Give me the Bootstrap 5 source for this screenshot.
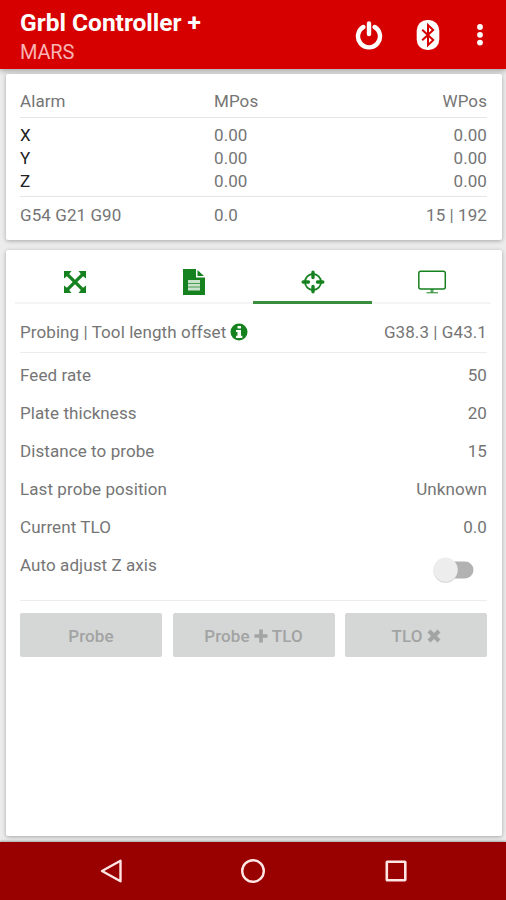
<!DOCTYPE html>
<html lang="en">
<head>
<meta charset="utf-8">
<meta name="viewport" content="width=device-width, initial-scale=1">
<title>Grbl Controller +</title>
<link href="https://cdn.jsdelivr.net/npm/bootstrap@5.3.0/dist/css/bootstrap.min.css" rel="stylesheet">
<style>
body { font-family: Roboto, "Liberation Sans", sans-serif; font-size: 17px; line-height: 23px; color: #757575; background: #ececec; letter-spacing: .08px; height: 900px; overflow: hidden; }
.app-bar { height: 69px; background: #d60000; padding: 0 17px 0 20px; box-shadow: 0 2px 5px rgba(0,0,0,.3); }
.app-title { font-size: 24.5px; line-height: 28px; font-weight: 700; color: #fff; letter-spacing: 0; padding-top: 9px; }
.app-sub { font-size: 20px; line-height: 24px; color: #f8b4b4; letter-spacing: -.2px; padding-top: 3px; }
.bt { margin-left: 33px; }
.more { margin: 0 5px 0 36px; }
.panel { background: #fff; border-radius: 2px; box-shadow: 0 1px 4px rgba(0,0,0,.3); margin-left: 6px; margin-right: 4px; }
.status { margin-top: 5px; height: 166px; padding: 12px 15px 0 14px; }
.status .c1 { width: 194px; }
.status-head { height: 32px; padding-top: 4px; border-bottom: 1px solid #e6e6e6; }
.axes { height: 79px; padding-top: 6px; border-bottom: 1px solid #e6e6e6; }
.axis { color: #212121; }
.modes { padding-top: 7px; }
.work { margin-top: 10px; height: 586px; }
.tabs { height: 54px; margin: 0 11px 0 9px; }
.tab-item { border: 0; border-bottom: 2px solid #f5f5f5; background: none; padding: 12px 0 0; color: #16811f; }
.tab-item.active { border-bottom: 3px solid #388e3c; }
.work-body { padding: 0 15px 0 14px; }
.probe-head { height: 49px; padding-top: 8px; border-bottom: 1px solid #ececec; }
.settings { padding-top: 3px; height: 248px; border-bottom: 1px solid #ececec; }
.setting { height: 38px; }
.switch { width: 42px; height: 26px; margin: 9px 13px 0 0; }
.actions { padding-top: 12px; gap: 10.5px; }
.act { height: 44px; border: 0; border-radius: 2px; background: #d5d7d6; color: #a2a3a3; font-weight: 500; font-size: 17px; flex: 0 0 142px; padding: 2px 0 0; letter-spacing: .1px; }
.act.wide { flex: 1 1 0; }
.soft-keys { height: 58px; margin-top: 6px; background: #990000; padding: 0 39px 0 40px; box-shadow: 0 -1px 2px rgba(0,0,0,.3); position: relative; }
.soft-keys > div { flex: 1; }
svg { display: block; flex: none; }
</style>
</head>
<body>
<header class="app-bar d-flex justify-content-between">
  <div>
    <div class="app-title">Grbl Controller +</div>
    <div class="app-sub">MARS</div>
  </div>
  <div class="d-flex align-items-center">
    <svg width="28" height="30" viewBox="0 0 28 30" fill="none" stroke="#fff" stroke-width="4.4" stroke-linecap="round"><path d="M8.3 7a11 11 0 1 0 11.4 0M14 3.5v10.500"/></svg>
    <svg width="24" height="32" viewBox="0 0 24 32" class="bt"><rect x=".7" y="1" width="22.6" height="30" rx="10.5" fill="#fff"/><path d="M6.200 10.800l11 10.300-5.200 5V6l5.200 5-11 10.300" fill="none" stroke="#d60000" stroke-width="2"/></svg>
    <svg width="8" height="22" viewBox="0 0 8 22" fill="#fff" class="more"><circle cx="4" cy="3" r="2.9"/><circle cx="4" cy="10.8" r="2.9"/><circle cx="4" cy="18.6" r="2.9"/></svg>
  </div>
</header>
<section class="panel status">
  <div class="status-head d-flex"><div class="c1">Alarm</div><div>MPos</div><div class="ms-auto">WPos</div></div>
  <div class="axes">
    <div class="d-flex"><div class="c1 axis">X</div><div>0.00</div><div class="ms-auto">0.00</div></div>
    <div class="d-flex"><div class="c1 axis">Y</div><div>0.00</div><div class="ms-auto">0.00</div></div>
    <div class="d-flex"><div class="c1 axis">Z</div><div>0.00</div><div class="ms-auto">0.00</div></div>
  </div>
  <div class="modes d-flex"><div class="c1">G54 G21 G90</div><div>0.0</div><div class="ms-auto">15 | 192</div></div>
</section>
<main class="panel work">
  <nav class="tabs d-flex">
    <button class="tab-item d-flex justify-content-center align-items-center w-25" aria-label="Jog"><svg width="24" height="24" viewBox="0 0 24 24" fill="currentColor"><path d="M1 1h7.500L6.200 3.900 12 9.700l5.800-5.800L15.500 1H23v7.500l-2.900-2.300-5.800 5.800 5.800 5.800 2.900-2.300V23h-7.500l2.300-2.900-5.800-5.800-5.800 5.800L8.500 23H1v-7.500l2.900 2.300L9.700 12 3.900 6.200 1 8.500z"/></svg></button>
    <button class="tab-item d-flex justify-content-center align-items-center w-25" aria-label="File"><svg width="24" height="28" viewBox="0 0 24 28"><path d="M1 1h13v8.500h9V27H1zM15.500 2v6H22z" fill="currentColor"/><path d="M6 12h12v10.500H6z" fill="#c9e2cc"/><path d="M6 15.500h12M6 19h12" stroke="currentColor" stroke-width=".7"/></svg></button>
    <button class="tab-item active d-flex justify-content-center align-items-center w-25" aria-label="Probe"><svg width="24" height="24" viewBox="0 0 24 24" fill="none" stroke="currentColor"><circle cx="12" cy="12" r="8" stroke-width="1.800"/><path d="M12 2.200v5.300M12 16.500v5.300M2.200 12h5.300M16.500 12h5.300" stroke-width="3.400" stroke-linecap="round"/></svg></button>
    <button class="tab-item d-flex justify-content-center align-items-center w-25" aria-label="Console"><svg width="30" height="24" viewBox="0 0 30 24" fill="none" stroke="currentColor"><rect x="1.800" y="1.200" width="26.500" height="17.800" rx="2" stroke-width="1.500"/><path d="M15 19v3.500" stroke-width="3" opacity=".7"/><path d="M9.500 22.700h11.500" stroke-width="1.400" opacity=".7"/></svg></button>
  </nav>
  <div class="work-body">
    <div class="probe-head d-flex align-items-center">
      <span>Probing | Tool length offset</span>
      <svg class="ms-1" width="18" height="18" viewBox="0 0 18 18"><circle cx="9" cy="9" r="8.500" fill="#16811f"/><path d="M7.500 3h3.500v2.600H7.500zM6 7h5v5.800h1.300V15H6v-2.200h1.500V9H6z" fill="#fff"/></svg>
      <span class="ms-auto">G38.3 | G43.1</span>
    </div>
    <div class="settings">
      <div class="setting d-flex align-items-center justify-content-between"><span>Feed rate</span><span>50</span></div>
      <div class="setting d-flex align-items-center justify-content-between"><span>Plate thickness</span><span>20</span></div>
      <div class="setting d-flex align-items-center justify-content-between"><span>Distance to probe</span><span>15</span></div>
      <div class="setting d-flex align-items-center justify-content-between"><span>Last probe position</span><span>Unknown</span></div>
      <div class="setting d-flex align-items-center justify-content-between"><span>Current TLO</span><span>0.0</span></div>
      <div class="setting d-flex align-items-center justify-content-between"><span>Auto adjust Z axis</span>
        <svg class="switch" viewBox="0 0 42 26"><rect x="10" y="4.500" width="31.500" height="17" rx="8.500" fill="#b2b2b2"/><circle cx="13.500" cy="13.700" r="12" fill="#d0d0d0"/><circle cx="13.500" cy="12.700" r="12.200" fill="#ededed"/></svg></div>
    </div>
    <div class="actions d-flex">
      <button class="act">Probe</button>
      <button class="act wide d-flex align-items-center justify-content-center">Probe<svg class="mx-1" width="14" height="14" viewBox="0 0 14 14"><path d="M7 .5v13M.5 7h13" stroke="#a2a3a3" stroke-width="3.600"/></svg>TLO</button>
      <button class="act d-flex align-items-center justify-content-center">TLO<svg class="ms-1" width="14" height="14" viewBox="0 0 14 14"><path d="M2 2l10 10M12 2L2 12" stroke="#a2a3a3" stroke-width="4.200"/></svg></button>
    </div>
  </div>
</main>
<footer class="soft-keys d-flex align-items-center">
  <div class="d-flex justify-content-center"><svg width="24" height="26" viewBox="0 0 24 26" fill="none" stroke="#ffe4e4" stroke-width="2.400" stroke-linejoin="round"><path d="M21.500 2.800v20.500L3 13z"/></svg></div>
  <div class="d-flex justify-content-center"><svg width="26" height="26" viewBox="0 0 26 26" fill="none" stroke="#ffe4e4" stroke-width="2.400"><circle cx="13" cy="13" r="10.800"/></svg></div>
  <div class="d-flex justify-content-center"><svg width="24" height="24" viewBox="0 0 24 24" fill="none" stroke="#ffe4e4" stroke-width="2.600"><rect x="2.800" y="2.800" width="18.500" height="18.500" rx=".5"/></svg></div>
</footer>
<script src="https://cdn.jsdelivr.net/npm/bootstrap@5.3.0/dist/js/bootstrap.bundle.min.js"></script>
</body>
</html>
